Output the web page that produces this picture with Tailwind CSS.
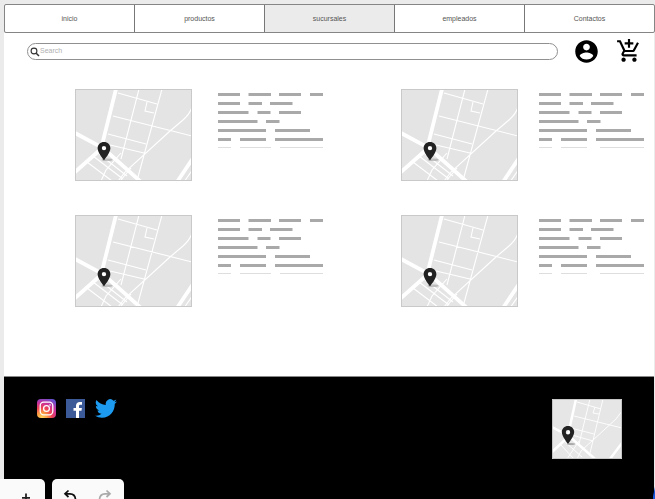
<!DOCTYPE html>
<html lang="es">
<head>
<meta charset="utf-8">
<title>Sucursales</title>
<script src="https://cdn.jsdelivr.net/npm/@tailwindcss/browser@4"></script>
</head>
<body class="w-[655px] h-[499px] overflow-hidden bg-[#ebebeb] font-['Liberation_Sans',Arial,sans-serif]">
<svg class="hidden">
  <symbol id="map" viewBox="0 0 117 92" preserveAspectRatio="none">
    <rect width="117" height="92" fill="#e4e4e4"/>
    <g fill="none" stroke="#fff">
      <path stroke-width="3.8" d="M41 0 27 56M0 44 28 59 66 93M0 83 26 60M102 93 118 69"/>
      <path stroke-width="1.1" d="M43 4 82 15M64 0 46 70M87 0 63 88M38 27 117 47M33 45 71 55M35 56 69 64M72 13 70 22 79 24M117 18Q115 25 108 31L95 42 50 83 43 92M12 73 37 92M18 67 48 90M24 65 52 87M26 92 31 81 46 64M45 92 56 79M109 93 118 80"/>
    </g>
    <ellipse cx="32" cy="70.8" rx="5.500" ry="1.300" fill="#aaa" opacity=".7"/>
    <path fill="#222" fill-rule="evenodd" d="M29 53C25.300 53 22.600 55.700 22.600 59.200c0 4.400 6.400 12 6.400 12s6.400-7.600 6.400-12C35.400 55.700 32.700 53 29 53zm0 3.900a2.200 2.200 0 1 1 0 4.400 2.200 2.200 0 0 1 0-4.400z"/>
    <rect x=".5" y=".5" width="116" height="91" fill="none" stroke="#c9c9c9"/>
  </symbol>
  <symbol id="copy" viewBox="0 0 106 56">
    <path fill="none" stroke="#a9a9a9" stroke-width="3" d="M0 1.500H22M30.500 1.500H53M61 1.500H83M92 1.500H105M0 10.500H22M30.500 10.500H44M52 10.500H74.500M0 19.500H30.500M39.500 19.500H52.500M61 19.500H83M0 28.500H39.500M48 28.500H61.500M0 37.500H48M57 37.500H92M0 46.500H13M22 46.500H48M57 46.500H105"/>
  </symbol>
</svg>
<div class="flex h-full flex-col pt-1 pl-1">
  <nav class="grid h-[29px] w-[651px] shrink-0 grid-cols-[130px_130px_130px_130px_129px] rounded-[2px] border border-[#858585] bg-white text-[7px] leading-[27px] text-[#555] text-center">
    <div class="border-r border-[#777]">inicio</div>
    <div class="border-r border-[#777]">productos</div>
    <div class="border-r border-[#777] bg-[#ebebeb]">sucursales</div>
    <div class="border-r border-[#777]">empleados</div>
    <div>Contactos</div>
  </nav>
  <main class="h-[343px] w-[650px] shrink-0 bg-white">
    <div class="flex h-[56px] items-start pl-[23px] pt-[5px]">
      <div class="mt-[5px] flex h-[17px] w-[531px] shrink-0 items-center rounded-full border border-[#909090] pl-[2px] text-[7px] text-[#b0b0b0]">
        <svg class="h-[10px] w-[10px]" viewBox="0 0 10 10" fill="none" stroke="#333" stroke-width="1.100"><circle cx="4" cy="4" r="2.900"/><path stroke-width="1.500" d="M6.200 6.200 9 9"/></svg>
        <span>Search</span>
      </div>
      <svg class="ml-[15px] h-[27px] w-[27px] shrink-0" viewBox="0 0 24 24"><path d="M12 2C6.480 2 2 6.480 2 12s4.480 10 10 10 10-4.480 10-10S17.520 2 12 2zm0 3c1.660 0 3 1.340 3 3s-1.340 3-3 3-3-1.340-3-3 1.340-3 3-3zm0 14.200c-2.500 0-4.710-1.280-6-3.220.030-1.990 4-3.080 6-3.080 1.990 0 5.970 1.090 6 3.080-1.290 1.940-3.500 3.220-6 3.220z"/></svg>
      <svg class="ml-[16px] h-[26px] w-[26px] shrink-0" viewBox="0 0 24 24"><path d="M11 9h2V6h3V4h-3V1h-2v3H8v2h3v3zm-4 9c-1.100 0-1.990.900-1.990 2S5.900 22 7 22s2-.900 2-2-.900-2-2-2zm10 0c-1.100 0-1.990.900-1.990 2s.890 2 1.990 2 2-.900 2-2-.900-2-2-2zm-9.830-3.250.030-.120.900-1.630h7.450c.750 0 1.410-.410 1.750-1.030l3.860-7.010L19.420 4h-.010l-1.100 2-2.760 5H8.530l-.130-.270L6.160 6l-.950-2-.940-2H1v2h2l3.600 7.590-1.350 2.450c-.160.280-.250.610-.250.960 0 1.100.900 2 2 2h12v-2H7.420c-.130 0-.250-.110-.250-.250z"/></svg>
    </div>
    <div class="grid grid-cols-[326px_1fr] gap-y-[34px] pl-[71px]">
      <section class="flex gap-[26px]"><svg class="h-[92px] w-[117px]"><use href="#map"/></svg>
        <div class="pt-1"><svg class="h-[56px] w-[106px]"><use href="#copy"/><path stroke="#dedede" d="M0 54.500H13M22 54.500H53M62 54.500H105"/></svg></div></section>
      <section class="flex gap-[21px]"><svg class="h-[92px] w-[117px] shrink-0"><use href="#map"/></svg>
        <div class="pt-1"><svg class="h-[56px] w-[106px]"><use href="#copy"/><path stroke="#dedede" d="M0 54.500H13M22 54.500H48M61 54.500H105"/></svg></div></section>
      <section class="flex gap-[26px]"><svg class="h-[92px] w-[117px]"><use href="#map"/></svg>
        <div class="pt-1"><svg class="h-[56px] w-[106px]"><use href="#copy"/><path stroke="#dedede" d="M0 54.500H13M22 54.500H53M62 54.500H105"/></svg></div></section>
      <section class="flex gap-[21px]"><svg class="h-[92px] w-[117px] shrink-0"><use href="#map"/></svg>
        <div class="pt-1"><svg class="h-[56px] w-[106px]"><use href="#copy"/><path stroke="#dedede" d="M0 54.500H13M22 54.500H48M61 54.500H105"/></svg></div></section>
    </div>
  </main>
  <footer class="flex h-[123px] w-[650px] shrink-0 items-start border-t border-[#888] bg-black pl-[33px] pt-[22px]">
    <svg class="h-[19px] w-[19px]" viewBox="0 0 19 19">
      <defs><radialGradient id="ig" cx=".25" cy="1" r="1.100"><stop offset="0" stop-color="#ffd85f"/><stop offset=".25" stop-color="#fb9e42"/><stop offset=".5" stop-color="#ee4056"/><stop offset=".75" stop-color="#c532a0"/><stop offset="1" stop-color="#6752cf"/></radialGradient></defs>
      <rect width="19" height="19" rx="4" fill="url(#ig)"/>
      <g fill="none" stroke="#fff" stroke-width="1.300"><rect x="3.200" y="3.200" width="12.600" height="12.600" rx="3.500"/><circle cx="9.500" cy="9.500" r="2.900"/></g><circle cx="13" cy="6" r=".8" fill="#fff"/>
    </svg>
    <svg class="ml-[10px] h-[19px] w-[19px]" viewBox="0 0 19 19"><path fill="#3d5a98" d="M0 0h19v19H0z"/><path fill="#fff" d="M10 19v-7.200H7.500V8.900H10V6.800C10 4.300 11.500 3 13.800 3c1.100 0 2 .1 2.200.1v2.600h-1.500c-1.200 0-1.500.6-1.500 1.400v1.800h2.900l-.4 2.900H13V19z"/></svg>
    <svg class="ml-[10px] h-[19px] w-[22px]" viewBox="0 2 24 20" preserveAspectRatio="none"><path fill="#1d9bf0" d="M23.950 4.570a10 10 0 0 1-2.820.770 4.960 4.960 0 0 0 2.160-2.720c-.950.550-2 .960-3.130 1.180a4.920 4.920 0 0 0-8.380 4.480C7.690 8.090 4.070 6.130 1.640 3.160a4.930 4.930 0 0 0 1.520 6.570 4.900 4.900 0 0 1-2.230-.610v.060a4.920 4.920 0 0 0 3.950 4.830 5 5 0 0 1-2.210.080 4.940 4.940 0 0 0 4.600 3.420A9.870 9.870 0 0 1 0 19.540a14 14 0 0 0 7.550 2.210c9.050 0 14-7.500 14-13.980 0-.210 0-.420-.020-.630a10 10 0 0 0 2.460-2.550z"/></svg>
    <svg class="ml-[435px] h-[60px] w-[70px]" viewBox="0 0 70 60">
      <rect width="70" height="60" fill="#e6e6e6"/>
      <g fill="none" stroke="#fff"><path stroke-width="2.500" d="M24 0 16 36M0 28 17 37 43 60M0 53 16 38M58 60 70 44"/><path stroke-width=".9" d="M25 3 49 10M38 0 27 45M51 0 38 54M22 17 70 29M19 29 42 35M20 36 41 42M43 8 41 14 47 15M70 12 64 20 29 52 25 60M8 45 22 60M12 42 30 58M15 60 27 42"/></g>
      <ellipse cx="19" cy="45" rx="4" ry="1" fill="#aaa"/>
      <path fill="#222" fill-rule="evenodd" d="M16 27c-3.500 0-6.200 2.700-6.200 6.100C9.800 37.500 16 45 16 45s6.200-7.500 6.200-11.900C22.200 29.700 19.500 27 16 27zm0 4a2.200 2.200 0 1 1 0 4.400 2.200 2.200 0 0 1 0-4.400z"/>
      <path fill="none" stroke="#c6c6c6" d="M.5.500h69v59H.5z"/>
    </svg>
  </footer>
</div>
<!-- Floating editor controls -->
<div class="absolute bottom-0 left-0 flex h-5 items-end gap-[7px]">
  <div class="h-5 w-[45px] overflow-hidden rounded-tr-[5px] bg-[#fafafa]"><svg class="h-5 w-[45px]" viewBox="0 0 45 20"><path fill="none" stroke="#222" stroke-width="1.800" d="M26 14.500V23M22 18.900H30"/></svg></div>
  <div class="h-5 w-[72px] overflow-hidden rounded-t-[5px] bg-[#fafafa]"><svg class="h-5 w-[72px]" viewBox="0 0 72 20" fill="none" stroke-width="1.700"><path stroke="#111" d="M16.500 11.500 13 14.800 16.500 18M13 14.800H18Q23.500 15 23.500 21"/><path stroke="#aaa" d="M54.500 11.500 58 14.800 54.500 18M58 14.800H53Q47.500 15 47.500 21"/></svg></div>
</div>
<svg class="absolute right-0 bottom-0 h-3 w-[2px]" viewBox="0 0 2 12"><path fill="#1455d9" d="M2 0V12H0V9z"/></svg>
</body>
</html>
